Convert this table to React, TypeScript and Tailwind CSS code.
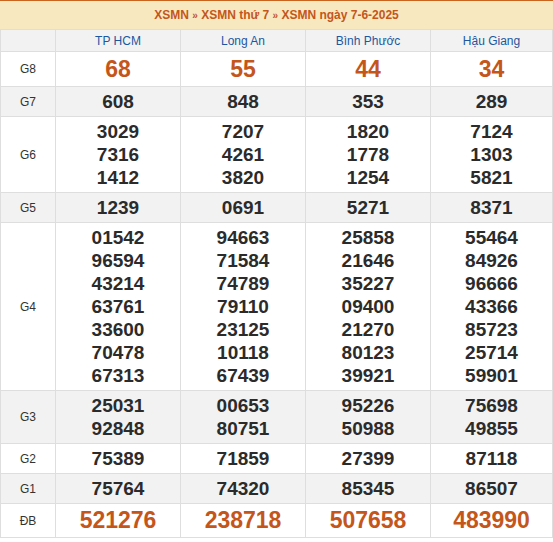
const provinces = ['TP HCM', 'Long An', 'Bình Phước', 'Hậu Giang'];

type Row = { label: string; values: string[][]; big?: string; shade?: boolean };

const rows: Row[] = [
  { label: 'G8', values: [['68'], ['55'], ['44'], ['34']], big: 'leading-[28px]' },
  { label: 'G7', values: [['608'], ['848'], ['353'], ['289']], shade: true },
  {
    label: 'G6',
    values: [
      ['3029', '7316', '1412'],
      ['7207', '4261', '3820'],
      ['1820', '1778', '1254'],
      ['7124', '1303', '5821'],
    ],
  },
  { label: 'G5', values: [['1239'], ['0691'], ['5271'], ['8371']], shade: true },
  {
    label: 'G4',
    values: [
      ['01542', '96594', '43214', '63761', '33600', '70478', '67313'],
      ['94663', '71584', '74789', '79110', '23125', '10118', '67439'],
      ['25858', '21646', '35227', '09400', '21270', '80123', '39921'],
      ['55464', '84926', '96666', '43366', '85723', '25714', '59901'],
    ],
  },
  {
    label: 'G3',
    values: [
      ['25031', '92848'],
      ['00653', '80751'],
      ['95226', '50988'],
      ['75698', '49855'],
    ],
    shade: true,
  },
  { label: 'G2', values: [['75389'], ['71859'], ['27399'], ['87118']] },
  { label: 'G1', values: [['75764'], ['74320'], ['85345'], ['86507']], shade: true },
  { label: 'ĐB', values: [['521276'], ['238718'], ['507658'], ['483990']], big: 'leading-[27px]' },
];

const App = () => {
  return (
    <div className="w-[553px] bg-white font-['Liberation_Sans',Arial,sans-serif]">
      {/* Title */}
      <div className="h-[29px] border-t border-[#c8641e] bg-[#f8e8bf] flex items-center justify-center">
        <span className="text-[12px] font-bold text-[#c4561b]">
          XSMN <span className="text-[10px]">»</span> XSMN thứ 7 <span className="text-[10px]">»</span> XSMN ngày 7-6-2025
        </span>
      </div>

      <table className="w-full table-fixed border-collapse">
        <colgroup>
          <col className="w-[55px]" />
          <col className="w-[125px]" />
          <col className="w-[125px]" />
          <col className="w-[125px]" />
          <col />
        </colgroup>
        <thead>
          <tr className="bg-[#f2f2f2]">
            <th className="border border-[#dedede] h-[22px] p-0" />
            {provinces.map((p) => (
              <th key={p} className="border border-[#dedede] h-[22px] p-0 text-[12px] font-normal text-[#1c57a0]">
                {p}
              </th>
            ))}
          </tr>
        </thead>
        <tbody>
          {rows.map((row) => (
            <tr key={row.label} className={row.shade ? 'bg-[#f2f2f2]' : 'bg-white'}>
              <td className="border border-[#dedede] text-center text-[12px] text-[#333]">{row.label}</td>
              {row.values.map((vals, i) => (
                <td key={i} className="border border-[#dedede] text-center py-[3px]">
                  {vals.map((v) => (
                    <div
                      key={v}
                      className={
                        row.big
                          ? `text-[23px] ${row.big} font-bold text-[#c4561b]`
                          : 'text-[19px] leading-[23px] font-bold text-[#2b2b2b]'
                      }
                    >
                      {v}
                    </div>
                  ))}
                </td>
              ))}
            </tr>
          ))}
        </tbody>
      </table>
    </div>
  );
};

export default App;
